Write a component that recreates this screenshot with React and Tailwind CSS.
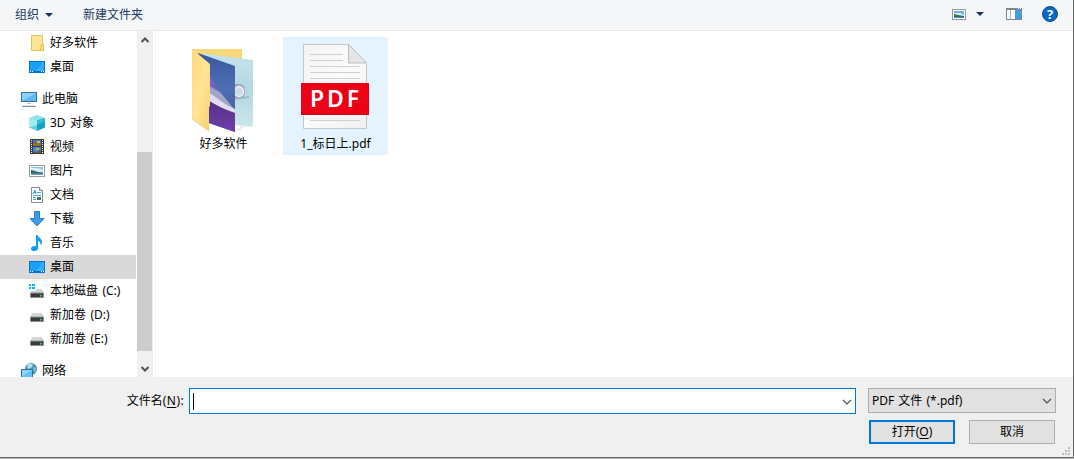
import { useState } from 'react';

const FONT = "font-['Noto_Sans','Noto_Sans_CJK_SC',sans-serif]";

const DesktopIcon = () => (
  <svg width="16" height="16" viewBox="0 0 16 16">
    <rect x="0.5" y="2.5" width="15" height="11" fill="#1a9ffc" stroke="#0873c7" />
    <path d="M7 12l7-9h1v9z" fill="#35adff" />
    <path d="M1 12.500h14" stroke="#0d6fbe" />
    <path d="M1 12.500h1M3 12.500h1M12 12.500h1M14 12.500h1" stroke="#e6f5ff" />
  </svg>
);

const SmallFolderIcon = () => (
  <svg width="16" height="16" viewBox="0 0 16 16">
    <path d="M2.5 0.5h11v15h-11z" fill="#ffe696" stroke="#e9c557" />
    <path d="M12.5 9.5h2v6h-3z" fill="#ffe08a" stroke="#e3bb49" />
  </svg>
);

const ComputerIcon = () => (
  <svg width="16" height="16" viewBox="0 0 16 16">
    <rect x="0.5" y="1.5" width="15" height="9" fill="#5dbafa" stroke="#3f718f" />
    <path d="M1 2h14L1 10z" fill="#8ad0ff" />
    <path d="M6 12.5h4" stroke="#b5c3cc" />
    <path d="M1 15.5h14" stroke="#7e93a3" />
    <path d="M3 14.5h10" stroke="#dbe3e8" />
  </svg>
);

const CubeIcon = () => (
  <svg width="16" height="16" viewBox="0 0 16 16">
    <path d="M0 3l8-3 8 3-8 3z" fill="#8fe4ec" />
    <path d="M0 3l8 2.500V16l-8-3.500z" fill="#5fd2df" />
    <path d="M0 3l8 2.500V10L0 12.500z" fill="#a5ecf1" />
    <path d="M8 5.500L16 3v9.500L8 16z" fill="#12a3be" />
    <path d="M8 5.500L16 3v3l-8 4z" fill="#35bdd1" />
  </svg>
);

const VideoIcon = () => (
  <svg width="16" height="16" viewBox="0 0 16 16">
    <rect x="1" y="0" width="14" height="15" fill="#3a3a3a" />
    <path d="M2.500 1v14M13.500 1v14" stroke="#f2f2f2" strokeDasharray="1 1" />
    <rect x="4" y="1" width="8" height="6" fill="#3f7bd8" />
    <rect x="4" y="8" width="8" height="6" fill="#3f8be4" />
    <path d="M4 5h3V3h2v2h3v2H4z" fill="#8f7a2c" />
    <path d="M5 3h2v2H5z" fill="#c43b2d" />
    <path d="M8 2h3v2H8z" fill="#e0b62c" />
    <path d="M4 12l3 1 2-1 3-1v3H4z" fill="#5a6240" />
    <path d="M7 9h3v2H7z" fill="#d9a92c" />
  </svg>
);

const PictureIcon = () => (
  <svg width="16" height="16" viewBox="0 0 16 16">
    <rect x="0.500" y="2.500" width="15" height="11" fill="#fff" stroke="#9a9a9a" />
    <rect x="2" y="4" width="12" height="8" fill="#8fc2f0" />
    <path d="M2 5h7l5 2v2H2z" fill="#dceef8" />
    <path d="M2 7l4 1 3 1 5 .5V11H2z" fill="#2f6a68" />
    <path d="M2 10.500h12V12H2z" fill="#6d9fb4" />
  </svg>
);

const DocumentIcon = () => (
  <svg width="16" height="16" viewBox="0 0 16 16">
    <path d="M2.500 0.500h8l3 3v12h-11z" fill="#fff" stroke="#8c8c8c" />
    <path d="M10.500 0.500v3h3" fill="#eee" stroke="#8c8c8c" />
    <path d="M4 7l2-4 1 4M5 5.500h2" fill="none" stroke="#2796dd" />
    <path d="M8 5.500h4M4 8.500h8M4 10.500h3M4 12.500h3" stroke="#4aa6e2" />
    <rect x="8" y="10" width="4" height="3" fill="#3b7480" />
  </svg>
);

const DownloadIcon = () => (
  <svg width="16" height="16" viewBox="0 0 16 16">
    <path d="M5.500 0.500h5v7h4.500L8 15 1 7.500h4.500z" fill="#3d9bea" stroke="#2c7dc9" />
  </svg>
);

const MusicIcon = () => (
  <svg width="16" height="16" viewBox="0 0 16 16">
    <path
      d="M7 0h1.500c.3 2 4.500 3.500 4.500 7 0 1.500-.5 2.800-1.300 3.700.3-3-1-4.200-2.700-5V13c0 1.800-1.500 3-3.500 3S2 15.200 2 13.700C2 12 3.800 11 6 11h1z"
      fill="#0f9bf2"
    />
  </svg>
);

const DriveIcon = ({ system }) => (
  <svg width="16" height="16" viewBox="0 0 16 16">
    <path d="M3.500 6h9l2.500 4H1z" fill="#d3d5d7" />
    <rect x="1" y="9.500" width="14" height="5.500" rx="0.800" fill="#8e9194" />
    <rect x="2" y="10.500" width="12" height="3.500" fill="#383b3e" />
    <rect x="11" y="12" width="1.500" height="1.500" fill="#4ef04a" />
    {system && (
      <>
        <rect x="0" y="0" width="7" height="8" fill="#fff" />
        <path d="M0 1h2v2H0zM3 1h3v2H3zM0 4h2v2H0zM3 4h3v2H3z" fill="#00b4ef" />
      </>
    )}
  </svg>
);

const NetworkIcon = () => (
  <svg width="16" height="16" viewBox="0 0 16 16">
    <circle cx="10" cy="6" r="6" fill="#4e8fb4" />
    <path d="M6 2c2-2 5-2 6 0l-2 3-3 1z" fill="#b5dcec" />
    <path d="M12 4l3 1-1 4-2-2z" fill="#86bdd7" />
    <rect x="0.500" y="6.500" width="11" height="8" fill="#64bff8" stroke="#2b73a3" />
    <path d="M1 7h10L1 13z" fill="#8dd4ff" />
  </svg>
);

const FolderPreviewIcon = () => (
  <svg className="ml-[2px] block" width="80" height="96" viewBox="0 0 80 96">
    <defs>
      <linearGradient id="flap" x1="0" y1="0" x2="1" y2="1">
        <stop offset="0" stopColor="#fbd876" />
        <stop offset="0.5" stopColor="#ffe597" />
        <stop offset="1" stopColor="#f7cf6c" />
      </linearGradient>
      <linearGradient id="sky" x1="0" y1="0" x2="0" y2="1">
        <stop offset="0" stopColor="#3b579f" />
        <stop offset="0.45" stopColor="#4d70b3" />
        <stop offset="1" stopColor="#46508f" />
      </linearGradient>
      <linearGradient id="dune" x1="0" y1="0" x2="0" y2="1">
        <stop offset="0" stopColor="#5b2d83" />
        <stop offset="1" stopColor="#6942ab" />
      </linearGradient>
      <linearGradient id="teal" x1="0" y1="0" x2="0" y2="1">
        <stop offset="0" stopColor="#c3e3eb" />
        <stop offset="0.5" stopColor="#b3d8e2" />
        <stop offset="1" stopColor="#cbe6eb" />
      </linearGradient>
      <linearGradient id="shade" x1="0" y1="0" x2="1" y2="0">
        <stop offset="0" stopColor="#bbb" />
        <stop offset="1" stopColor="#fff" stopOpacity="0" />
      </linearGradient>
    </defs>
    <path d="M50 92l8-7 3 1zM68 86l7-4 1 2z" fill="url(#shade)" opacity="0.6" />
    <path d="M7 9h50v70H25z" fill="#f8d67a" />
    <path d="M18 13.500L68 20v67l-18-2z" fill="url(#teal)" />
    <path d="M50 57l14-1v2l-14 2z" fill="#89afbc" opacity="0.6" />
    <path d="M48 44h7c3 0 5 3 5 7s-2 7-5 7h-7z" fill="#a89fc5" />
    <ellipse cx="54" cy="51.500" rx="4.500" ry="5" fill="#c9dde3" stroke="#f3f3fa" strokeWidth="1.300" />
    <path d="M13 13l37 13v66l-26-9z" fill="url(#sky)" />
    <path d="M24 36c4 3 6 8 8 17l-8-2z" fill="#7a62c4" />
    <path d="M24 46l11 6 15 18v5L24 60z" fill="#a3a5c6" />
    <path d="M24 53c7 3 12 10 26 16v4c-12-3-18-8-26-12z" fill="#e1dcef" />
    <path d="M24 61c8 5 17 9 26 12v19l-26-9z" fill="url(#dune)" />
    <path d="M7 9l18 15v42l-1 1v24L7 79z" fill="url(#flap)" />
    <path d="M7 79l17 12" stroke="#dfb758" strokeWidth="0.600" />
  </svg>
);

const PdfIcon = () => (
  <svg className="mr-[2px] block" width="70" height="88" viewBox="0 0 70 88">
    <defs>
      <linearGradient id="paper" x1="0" y1="0" x2="1" y2="1">
        <stop offset="0" stopColor="#f2f3f4" />
        <stop offset="0.5" stopColor="#fbfbfb" />
        <stop offset="1" stopColor="#f0f0f0" />
      </linearGradient>
    </defs>
    <path d="M3.500 2.500h45l18 19v65h-63z" fill="url(#paper)" stroke="#c3c7ca" />
    <path d="M48.500 2.500v18.500h18z" fill="#e4e5e6" stroke="#bbbec0" />
    <path d="M10 12.500h33M10 18.500h33M10 24.500h50M10 30.500h50M10 36.500h50M10 78.500h50" stroke="#ced1d3" />
    <rect x="1" y="41" width="68" height="32" fill="#ec0016" />
    <path d="M1 72.500h68" stroke="#c20a1a" />
    <text
      x="10"
      y="65"
      textLength="49"
      className="font-['Noto_Sans',sans-serif] text-[23px] font-semibold"
      fill="#fff"
    >
      PDF
    </text>
  </svg>
);

const treeItems = [
  { id: 'soft', label: '好多软件', Icon: SmallFolderIcon },
  { id: 'desktop-quick', label: '桌面', Icon: DesktopIcon },
  { id: 'pc', label: '此电脑', Icon: ComputerIcon, root: true },
  { id: '3d', label: '3D 对象', Icon: CubeIcon },
  { id: 'video', label: '视频', Icon: VideoIcon },
  { id: 'picture', label: '图片', Icon: PictureIcon },
  { id: 'document', label: '文档', Icon: DocumentIcon },
  { id: 'download', label: '下载', Icon: DownloadIcon },
  { id: 'music', label: '音乐', Icon: MusicIcon },
  { id: 'desktop', label: '桌面', Icon: DesktopIcon },
  { id: 'c', label: '本地磁盘 (C:)', Icon: DriveIcon, system: true },
  { id: 'd', label: '新加卷 (D:)', Icon: DriveIcon },
  { id: 'e', label: '新加卷 (E:)', Icon: DriveIcon },
  { id: 'network', label: '网络', Icon: NetworkIcon, root: true },
];

const Chevron = ({ up, className = '' }) => (
  <svg className={className} width="10" height="8" viewBox="0 0 10 8" fill="none">
    <path d={up ? 'M1.500 6L5 2.500 8.500 6' : 'M1 2l4 4 4-4'} stroke="currentColor" strokeWidth={up ? 2 : 1.2} />
  </svg>
);

const Caret = () => (
  <svg width="8" height="4" viewBox="0 0 8 4">
    <path d="M0 0h8L4 4z" fill="#1e3264" />
  </svg>
);

function Toolbar() {
  return (
    <header className="flex h-[31px] shrink-0 items-center border-b border-[#e6e8ea] bg-[#f4f6f8] pr-[15px] pb-0.5 pl-[15px] text-[#1e395b]">
      <button className="flex items-center gap-[6px] pt-px">
        组织
        <Caret />
      </button>
      <button className="ml-[30px] pt-px">新建文件夹</button>
      <div className="ml-auto flex items-center">
        <svg width="14" height="11" viewBox="0 0 14 11">
          <rect x="0.500" y="0.500" width="13" height="10" fill="#fff" stroke="#959ba0" />
          <rect x="2" y="2" width="10" height="7" fill="#70aee9" />
          <path d="M2 4h6l4 2v1H2z" fill="#d5ecf9" />
          <path d="M2 5l4 1 6 1v1H2z" fill="#39705e" />
          <path d="M2 8h10v1H2z" fill="#4b8bb0" />
        </svg>
        <span className="ml-[10px]">
          <Caret />
        </span>
        <svg className="ml-[22px]" width="16" height="12" viewBox="0 0 16 12">
          <rect x="0.500" y="0.500" width="15" height="11" fill="#fff" stroke="#83878c" />
          <path d="M0 1h16" stroke="#83878c" strokeWidth="2" />
          <path d="M4.500 2v9" stroke="#aeb2b5" />
          <rect x="9" y="2" width="6" height="9" fill="#419de4" />
          <path d="M12 .5h1M14 .5h1" stroke="#fff" />
        </svg>
        <svg className="ml-5 block" width="16" height="16" viewBox="0 0 16 16">
          <circle cx="8" cy="8" r="7.500" fill="#0669c9" stroke="#154a83" />
          <text x="8" y="12.500" textAnchor="middle" fill="#fff" className="text-[13px] font-bold">
            ?
          </text>
        </svg>
      </div>
    </header>
  );
}

function Sidebar({ selected, onSelect }) {
  return (
    <nav className="h-[346px] w-[136px] shrink-0 overflow-hidden">
      {treeItems.map(({ id, label, Icon, root, system }) => (
        <button
          key={id}
          onClick={() => onSelect(id)}
          className={`flex h-6 w-full items-center gap-[5px] leading-3 whitespace-nowrap [word-spacing:1.3px] ${
            root ? 'mt-2 pl-[21px]' : 'pl-[29px]'
          } ${selected === id ? 'bg-[#d9d9d9]' : ''}`}
        >
          <span className="shrink-0">
            <Icon {...(system ? { system } : {})} />
          </span>
          {label}
        </button>
      ))}
    </nav>
  );
}

function Scrollbar() {
  return (
    <div className="ml-px flex h-[346px] w-4 shrink-0 flex-col items-center bg-[#f0f0f0] text-[#505050]">
      <div className="mr-px flex h-[18px] items-center">
        <Chevron up />
      </div>
      <div className="mt-[103px] mr-px h-[199px] w-[15px] bg-[#cdcdcd]" />
      <div className="mt-auto mr-px flex h-[17px] items-center">
        <svg width="10" height="8" viewBox="0 0 10 8" fill="none">
          <path d="M1.500 2L5 5.500 8.500 2" stroke="currentColor" strokeWidth="2" />
        </svg>
      </div>
    </div>
  );
}

function Footer({ fileName, setFileName }) {
  return (
    <footer className="relative flex h-[80px] shrink-0 flex-col bg-[#f0f0f0] pt-[11px] pr-[17px]">
      <div className="flex items-start">
        <label htmlFor="filename" className="mt-[5px] w-[184px] text-right">
          文件名<span className="tracking-[0.4px]">(<u className="underline-offset-2">N</u>):</span>
        </label>
        <div className="ml-[5px] flex h-[26px] w-[667px] items-center border border-[#0078d7] bg-white pr-[3px] pl-[3px]">
          {/* 文本光标 */}
          <span className="h-[17px] w-px bg-black" />
          <input
            id="filename"
            value={fileName}
            onChange={(e) => setFileName(e.target.value)}
            className="h-full flex-1 outline-none"
          />
          <Chevron className="mt-px text-[#505050]" />
        </div>
        <button className="ml-3 flex h-[25px] w-[188px] items-center justify-between border border-[#adadad] bg-[#e1e1e1] pr-[3px] pl-[3px] [word-spacing:1px]">
          PDF 文件 (*.pdf)
          <Chevron className="text-[#505050]" />
        </button>
      </div>
      <div className="mt-[6px] mr-px flex justify-end gap-[14px]">
        <button className="flex h-6 w-[86px] items-center justify-center border-2 border-[#0078d7] bg-[#e1e1e1]">
          打开(<u className="underline-offset-2">O</u>)
        </button>
        <button className="h-6 w-[86px] border border-[#adadad] bg-[#e1e1e1]">取消</button>
      </div>
      <svg className="absolute right-[3px] bottom-[2px]" width="8" height="8" viewBox="0 0 8 8" fill="#bfbfbf">
        <path d="M6 0h2v2H6zM3 3h2v2H3zM6 3h2v2H6zM0 6h2v2H0zM3 6h2v2H3zM6 6h2v2H6z" />
      </svg>
    </footer>
  );
}

export default function App() {
  const [selected, setSelected] = useState('desktop');
  const [fileName, setFileName] = useState('');

  return (
    <div className={`${FONT} h-[459px] w-[1074px] overflow-hidden bg-[#b5b5b5] text-xs leading-4 text-black`}>
      <div className="flex h-[458px] flex-col border-r border-b border-[#6a6a6a] bg-white">
        <Toolbar />
        <main className="flex h-[346px] shrink-0">
          <Sidebar selected={selected} onSelect={setSelected} />
          <Scrollbar />
          <section className="ml-[2px] flex flex-1 items-start border-l border-[#f3f3f3] pt-[6px]">
            <figure className="ml-[15px] flex w-[105px] flex-col items-center pt-[3px]">
              <FolderPreviewIcon />
              <figcaption>好多软件</figcaption>
            </figure>
            <figure className="ml-[7px] flex h-[118px] w-[105px] flex-col items-center bg-[#e5f3ff] pt-[5px]">
              <PdfIcon />
              <figcaption className="mt-[6px]">1_标日上.pdf</figcaption>
            </figure>
          </section>
        </main>
        <Footer fileName={fileName} setFileName={setFileName} />
      </div>
    </div>
  );
}
